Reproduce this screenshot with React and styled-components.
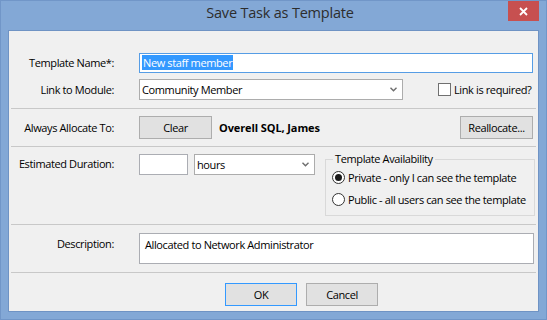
import React from 'react';
import styled, { createGlobalStyle } from 'styled-components';

const GlobalStyle = createGlobalStyle`
  html, body {
    margin: 0;
    padding: 0;
    background: #ffffff;
  }
  * {
    box-sizing: border-box;
  }
`;

const uiFont = `"Open Sans", "Noto Sans", sans-serif`;

const Window = styled.div`
  width: 547px;
  height: 320px;
  background: #83a8d6;
  border: 1px solid #7196c8;
  display: flex;
  flex-direction: column;
  font-family: ${uiFont};
  font-size: 11px;
  letter-spacing: -0.38px;
  color: #000;
`;

const TitleBar = styled.div`
  height: 29px;
  display: grid;
  grid-template-columns: 1fr auto 1fr;
  align-items: start;
  padding: 0 7px 0 20px;
`;

const Title = styled.div`
  grid-column: 2;
  padding-top: 2px;
  font-size: 14.5px;
  letter-spacing: -0.2px;
  line-height: 19px;
  color: #2d2d2d;
`;

const CloseButton = styled.div`
  grid-column: 3;
  justify-self: end;
  width: 31px;
  height: 20px;
  background: #c75050;
  display: flex;
  align-items: center;
  justify-content: center;
`;

const Client = styled.div`
  flex: 1;
  margin: 0 7px 7px 7px;
  background: #f0f0f0;
  border: 1px solid #6f93c4;
  padding: 0 2px;
  display: flex;
  flex-direction: column;
`;

const Section = styled.div`
  display: flex;
  flex-direction: column;
  gap: ${(p) => p.gap || 0}px;
  padding: ${(p) => p.top}px 0 ${(p) => p.bottom}px 0;
`;

const Separator = styled.div`
  height: 1px;
  background: #c8c8c8;
`;

const Row = styled.div`
  display: flex;
  align-items: ${(p) => p.align || 'center'};
  height: ${(p) => (p.h ? `${p.h}px` : 'auto')};
`;

const Label = styled.div`
  width: 103px;
  margin-right: 25px;
  text-align: right;
  line-height: 14px;
  white-space: nowrap;
  flex-shrink: 0;
  padding-top: ${(p) => p.pt || 0}px;
`;

const TextBox = styled.div`
  height: ${(p) => p.h || 20}px;
  width: ${(p) => (p.w ? `${p.w}px` : 'auto')};
  flex: ${(p) => (p.w ? '0 0 auto' : '1')};
  margin-right: ${(p) => p.mr || 0}px;
  margin-top: ${(p) => p.mt || 0}px;
  background: #fff;
  border: 1px solid ${(p) => (p.focused ? '#569de5' : '#abadb3')};
  padding: ${(p) => (p.multi ? '3px 5px' : '1px 2px')};
  line-height: 15px;
  white-space: nowrap;
  overflow: hidden;
`;

const Selected = styled.span`
  background: #3399ff;
  color: #fff;
  display: inline-block;
  padding: 0 1px;
`;

const Select = styled.div`
  width: ${(p) => p.w}px;
  height: ${(p) => p.h || 20}px;
  margin-top: ${(p) => p.mt || 0}px;
  margin-left: ${(p) => p.ml || 0}px;
  flex-shrink: 0;
  background: #fff;
  border: 1px solid #acacac;
  display: flex;
  align-items: center;
  justify-content: space-between;
  padding: 0 5px 0 2px;
  line-height: 15px;
`;

const Chevron = () => (
  <svg width="7" height="5" viewBox="0 0 7 5">
    <polyline points="0.5,0.8 3.5,3.8 6.5,0.8" fill="none" stroke="#6d6d6d" strokeWidth="1.4" />
  </svg>
);

const CheckGroup = styled.label`
  display: flex;
  align-items: center;
  gap: 3px;
  margin-left: 35px;
  white-space: nowrap;
`;

const CheckBox = styled.span`
  width: 13px;
  height: 13px;
  border: 1px solid #707070;
  background: #fff;
  display: inline-block;
`;

const Button = styled.div`
  width: ${(p) => p.w || 73}px;
  height: 23px;
  flex-shrink: 0;
  margin-left: ${(p) => (p.push ? 'auto' : `${p.ml || 0}px`)};
  background: #e1e1e1;
  border: 1px solid ${(p) => (p.primary ? '#3399ff' : '#adadad')};
  display: flex;
  align-items: center;
  justify-content: center;
  line-height: 14px;
`;

const Assignee = styled.div`
  margin-left: 7px;
  font-weight: 700;
  letter-spacing: -0.1px;
  white-space: nowrap;
`;

const GroupBox = styled.fieldset`
  margin: 0 1px 0 auto;
  width: 210px;
  height: 64px;
  border: 1px solid #d9d9d9;
  padding: 0 0 0 6px;
  min-width: 0;
`;

const Legend = styled.legend`
  margin-left: 1px;
  padding: 0 2px;
  line-height: 14px;
`;

const RadioRow = styled.label`
  display: flex;
  align-items: center;
  gap: 3px;
  height: 22px;
  white-space: nowrap;
`;

const Radio = styled.span`
  width: 13px;
  height: 13px;
  border-radius: 50%;
  border: 1px solid #333;
  background: #fff;
  display: inline-flex;
  align-items: center;
  justify-content: center;
  &::after {
    content: '';
    width: 7px;
    height: 7px;
    border-radius: 50%;
    background: ${(p) => (p.checked ? '#1a1a1a' : 'transparent')};
  }
`;

const Footer = styled.div`
  flex: 1;
  display: flex;
  align-items: flex-start;
  padding: 10px 0 0 214px;
  gap: 9px;
`;

export default function App() {
  return (
    <>
      <GlobalStyle />
      <Window>
        <TitleBar>
          <Title>Save Task as Template</Title>
          <CloseButton>
            <svg width="9" height="9" viewBox="0 0 9 9">
              <path d="M1 1 L8 8 M8 1 L1 8" stroke="#fff" strokeWidth="1.8" />
            </svg>
          </CloseButton>
        </TitleBar>
        <Client>
          <Section top={22} bottom={8} gap={6}>
            <Row h={20}>
              <Label>Template Name*:</Label>
              <TextBox focused mr={3}>
                <Selected>New staff member</Selected>
              </TextBox>
            </Row>
            <Row h={21}>
              <Label>Link to Module:</Label>
              <Select w={264} h={21}>
                <span>Community Member</span>
                <Chevron />
              </Select>
              <CheckGroup>
                <CheckBox />
                Link is required?
              </CheckGroup>
            </Row>
          </Section>
          <Separator />
          <Section top={7} bottom={7}>
            <Row h={23}>
              <Label>Always Allocate To:</Label>
              <Button>Clear</Button>
              <Assignee>Overell SQL, James</Assignee>
              <Button push>Reallocate...</Button>
              <span style={{ width: 3 }} />
            </Row>
          </Section>
          <Separator />
          <Section top={5} bottom={8}>
            <Row align="flex-start">
              <Label pt={5}>Estimated Duration:</Label>
              <TextBox w={49} h={21} mt={2} />
              <Select w={121} h={21} mt={2} ml={6}>
                <span>hours</span>
                <Chevron />
              </Select>
              <GroupBox>
                <Legend>Template Availability</Legend>
                <RadioRow>
                  <Radio checked />
                  Private - only I can see the template
                </RadioRow>
                <RadioRow>
                  <Radio />
                  Public - all users can see the template
                </RadioRow>
              </GroupBox>
            </Row>
          </Section>
          <Separator />
          <Section top={8} bottom={8}>
            <Row align="flex-start">
              <Label pt={4}>Description:</Label>
              <TextBox multi h={31} mr={2}>
                Allocated to Network Administrator
              </TextBox>
            </Row>
          </Section>
          <Separator />
          <Footer>
            <Button w={72} primary>OK</Button>
            <Button w={72}>Cancel</Button>
          </Footer>
        </Client>
      </Window>
    </>
  );
}
